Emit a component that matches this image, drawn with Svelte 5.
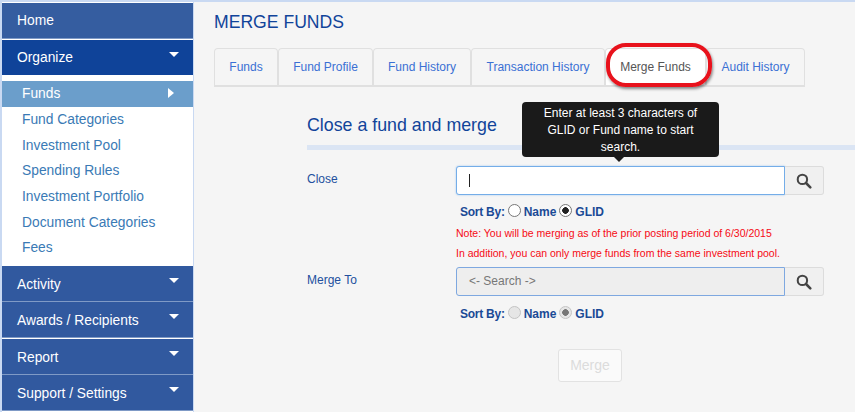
<script>
  const tabs = ['Funds', 'Fund Profile', 'Fund History', 'Transaction History', 'Merge Funds', 'Audit History'];
  const tabWidths = [64, 95, 98, 134, 101, 99];
  const subItems = ['Funds', 'Fund Categories', 'Investment Pool', 'Spending Rules', 'Investment Portfolio', 'Document Categories', 'Fees'];
  const lowerMenu = ['Activity', 'Awards / Recipients', 'Report', 'Support / Settings'];
</script>

{#snippet searchIcon()}
  <svg width="16" height="16" viewBox="0 0 15 15" fill="none" stroke="#444" aria-hidden="true">
    <circle cx="6" cy="6" r="4.4" stroke-width="1.9" />
    <path d="M9.4 9.4 L13.4 13.4" stroke-width="2.4" stroke-linecap="round" />
  </svg>
{/snippet}

{#snippet sortBy(disabled)}
  <div class="sort" class:disabled>
    <span class="sort-label">Sort By:</span>
    <span class="radio"></span>
    <span class="opt">Name</span>
    <span class="radio on"></span>
    <span class="opt">GLID</span>
  </div>
{/snippet}

<div class="page">
  <nav class="sidebar">
    <div class="nav-item home">Home</div>
    <div class="nav-item active">Organize<span class="caret"></span></div>
    <ul class="submenu">
      {#each subItems as item, i}
        <li class:current={i === 0}>
          {item}
          {#if i === 0}<span class="caret-right"></span>{/if}
        </li>
      {/each}
    </ul>
    {#each lowerMenu as item}
      <div class="nav-item lower">{item}<span class="caret"></span></div>
    {/each}
  </nav>

  <main class="content">
    <h1>MERGE FUNDS</h1>

    <div class="tabs">
      {#each tabs as tab, i}
        <div class="tab" class:selected={i === 4} style="width: {tabWidths[i]}px">{tab}</div>
      {/each}
      <div class="highlight"></div>
    </div>

    <section class="form">
      <h2>Close a fund and merge</h2>

      <div class="tooltip">
        Enter at least 3 characters of<br />GLID or Fund name to start<br />search.
      </div>

      <div class="row first">
        <span class="label">Close</span>
        <div class="field">
          <div class="input-group">
            <div class="input focus"><span class="cursor"></span></div>
            <div class="search-btn">{@render searchIcon()}</div>
          </div>
          {@render sortBy(false)}
          <p class="note">Note: You will be merging as of the prior posting period of 6/30/2015</p>
          <p class="note">In addition, you can only merge funds from the same investment pool.</p>
        </div>
      </div>

      <div class="row second">
        <span class="label">Merge To</span>
        <div class="field">
          <div class="input-group">
            <div class="input locked">&lt;- Search -&gt;</div>
            <div class="search-btn">{@render searchIcon()}</div>
          </div>
          {@render sortBy(true)}
        </div>
      </div>

      <div class="actions">
        <div class="merge-btn">Merge</div>
      </div>
    </section>
  </main>
</div>

<style>
  :global(body) {
    margin: 0;
    background: #f5f5f5;
  }

  .page {
    display: flex;
    width: 855px;
    height: 412px;
    overflow: hidden;
    box-sizing: border-box;
    border-top: 2px solid #c9d9f2;
    background: #f5f5f5;
    font-family: "Liberation Sans", Arial, sans-serif;
  }

  .sidebar {
    width: 191px;
    flex: none;
    padding-top: 1px;
    border-left: 2px solid #c9d9f2;
    border-right: 1px solid #c9d9f2;
    background: #fff;
  }

  .nav-item {
    position: relative;
    height: 35px;
    margin-bottom: 1.4px;
    padding-left: 15px;
    line-height: 35px;
    font-size: 13.8px;
    color: #fff;
    background: #31599f;
    box-shadow: 0 1px 0 #7f9ac6;
  }

  .nav-item.lower {
    line-height: 37px;
  }

  .nav-item.home {
    background: #355da0;
    margin-bottom: 2px;
  }

  .nav-item.active {
    background: #0f4399;
    margin-bottom: 0;
    box-shadow: none;
  }

  .caret {
    position: absolute;
    top: 12px;
    right: 14px;
    border-left: 5px solid transparent;
    border-right: 5px solid transparent;
    border-top: 5px solid #fff;
  }

  .submenu {
    list-style: none;
    margin: 0;
    padding: 6.3px 0 4.7px;
    background: #fff;
  }

  .submenu li {
    position: relative;
    height: 25.7px;
    padding-left: 20px;
    line-height: 25px;
    font-size: 13.8px;
    color: #3a7ab5;
  }

  .submenu li.current {
    color: #fff;
    background: #6b9ecb;
  }

  .caret-right {
    position: absolute;
    top: 7px;
    right: 19px;
    border-top: 5.5px solid transparent;
    border-bottom: 5.5px solid transparent;
    border-left: 6px solid #fff;
  }

  .content {
    flex: 1;
    min-width: 0;
    padding-left: 20px;
  }

  h1 {
    margin: 10px 0 16px;
    font-size: 17.6px;
    line-height: 20px;
    font-weight: normal;
    color: #11449a;
  }

  .tabs {
    position: relative;
    display: flex;
    height: 39px;
  }

  .tab {
    box-sizing: border-box;
    height: 39px;
    line-height: 37px;
    text-align: center;
    font-size: 12px;
    color: #3a70d4;
    border: 1px solid #e0e0e0;
    border-bottom-width: 2px;
    border-radius: 4px 4px 0 0;
  }

  .tab.selected {
    color: #555;
    background: #fff;
  }

  .highlight {
    position: absolute;
    left: 392px;
    top: -5px;
    width: 106px;
    height: 44px;
    box-sizing: border-box;
    border: 4px solid #e8121c;
    border-radius: 20px;
    box-shadow: 1px 2px 3px rgba(0, 0, 0, 0.45);
  }

  .form {
    position: relative;
    margin-left: 93px;
  }

  h2 {
    margin: 27px 0 0;
    height: 31px;
    font-size: 17.8px;
    line-height: 22px;
    font-weight: normal;
    color: #11449a;
    border-bottom: 5px solid #dbe5f4;
  }

  .tooltip {
    position: absolute;
    left: 215px;
    top: -12px;
    width: 197px;
    height: 55px;
    padding-top: 3px;
    box-sizing: border-box;
    text-align: center;
    font-size: 12px;
    line-height: 17px;
    color: #fff;
    background: #1a1a1a;
    border-radius: 4px;
  }

  .tooltip::after {
    content: "";
    position: absolute;
    left: 92px;
    bottom: -5px;
    border-left: 5px solid transparent;
    border-right: 5px solid transparent;
    border-top: 5px solid #1a1a1a;
  }

  .row {
    display: flex;
  }

  .row.first {
    margin-top: 16px;
  }

  .row.second {
    margin-top: 8px;
  }

  .label {
    width: 149px;
    flex: none;
    padding-top: 6px;
    line-height: 14px;
    font-size: 12px;
    color: #22509e;
  }

  .field {
    width: 368px;
  }

  .input-group {
    display: flex;
    height: 29px;
  }

  .input {
    box-sizing: border-box;
    width: 329px;
    border: 1px solid #74ade8;
    border-radius: 3px 0 0 3px;
  }

  .input.focus {
    display: flex;
    align-items: center;
    padding-left: 12px;
    background: #fff;
    box-shadow: 0 0 2px #9cc4ee;
  }

  .cursor {
    width: 1px;
    height: 13px;
    background: #222;
  }

  .input.locked {
    padding-left: 12px;
    line-height: 27px;
    font-size: 12px;
    color: #777;
    background: #eee;
    border-color: #7ea8e0;
  }

  .search-btn {
    box-sizing: border-box;
    width: 39px;
    display: flex;
    align-items: center;
    justify-content: center;
    background: #f0f0f0;
    border: 1px solid #dcdcdc;
    border-left: none;
    border-radius: 0 3px 3px 0;
  }

  .sort {
    display: flex;
    align-items: center;
    height: 14px;
    margin-top: 10px;
    padding-left: 4px;
    font-size: 12px;
    font-weight: bold;
    color: #1a4a96;
  }

  .second .sort {
    margin-top: 11px;
  }

  .sort-label {
    margin-right: 3px;
    letter-spacing: -0.25px;
  }

  .opt {
    margin-right: 3px;
  }

  .radio {
    box-sizing: border-box;
    width: 13px;
    height: 13px;
    margin: -3px 3px 0 0;
    border: 1px solid #777;
    border-radius: 50%;
    background: #fff;
  }

  .radio.on {
    background: radial-gradient(circle, #222 0 3px, #fff 3.6px);
  }

  .sort.disabled .radio {
    border-color: #c4c4c4;
    background: #e6e6e6;
  }

  .sort.disabled .radio.on {
    background: radial-gradient(circle, #777 0 3px, #e6e6e6 3.6px);
  }

  .note {
    margin: 8px 0 0;
    height: 12px;
    line-height: 12px;
    font-size: 10.5px;
    color: #f50a14;
    white-space: nowrap;
  }

  .actions {
    display: flex;
    margin: 28px 0 0 251px;
  }

  .merge-btn {
    box-sizing: border-box;
    width: 64px;
    height: 33px;
    line-height: 31px;
    text-align: center;
    font-size: 14px;
    color: #dcdcdc;
    background: #fafafa;
    border: 1px solid #e2e2e2;
    border-radius: 3px;
  }
</style>
